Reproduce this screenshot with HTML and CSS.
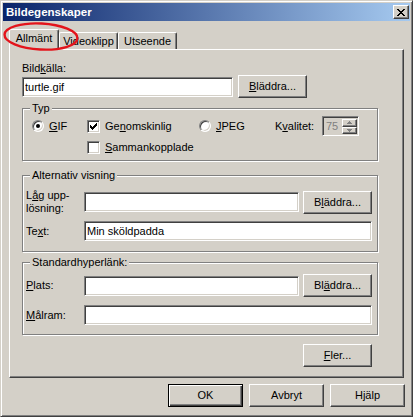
FILE: index.html
```html
<!DOCTYPE html>
<html lang="sv">
<head>
    <meta charset="UTF-8">
    <title>Bildegenskaper</title>
    <link rel="stylesheet" href="styles.css">
</head>
<body>

    <div class="window">
        <div class="titlebar">
            <span class="title">Bildegenskaper</span>
            <button class="close-btn">
                <svg width="8" height="7" viewBox="0 0 8 7" shape-rendering="crispEdges">
                    <path d="M0 0h2v1H0z M6 0h2v1H6z M1 1h2v1H1z M5 1h2v1H5z M2 2h4v1H2z M3 3h2v1H3z M2 4h4v1H2z M1 5h2v1H1z M5 5h2v1H5z M0 6h2v1H0z M6 6h2v1H6z" fill="#000"/>
                </svg>
            </button>
        </div>

        <div class="tabs">
            <div class="tab tab-active">Allmänt</div>
            <div class="tab">Videoklipp</div>
            <div class="tab">Utseende</div>
        </div>

        <div class="tab-panel">
            <label class="field-label">Bild<u>k</u>älla:</label>
            <div class="source-row">
                <input class="edit source-input" type="text" value="turtle.gif">
                <button class="btn"><u>B</u>läddra...</button>
            </div>

            <fieldset class="group group-type">
                <legend>Typ</legend>
                <div class="type-grid">
                    <div class="option"><span class="radio radio-on"></span><span><u>G</u>IF</span></div>
                    <div class="option">
                        <span class="check">
                            <svg width="7" height="7" viewBox="0 0 7 7" shape-rendering="crispEdges">
                                <path d="M0 2h1v3H0z M1 3h1v3H1z M2 4h1v3H2z M3 3h1v3H3z M4 2h1v3H4z M5 1h1v3H5z M6 0h1v3H6z" fill="#000"/>
                            </svg>
                        </span>
                        <span>Ge<u>n</u>omskinlig</span>
                    </div>
                    <div class="option"><span class="radio"></span><span><u>J</u>PEG</span></div>
                    <span>K<u>v</u>alitet:</span>
                    <div class="spinner">
                        <span class="spin-value">75</span>
                        <div class="spin-buttons">
                            <span class="spin-btn">
                                <svg width="5" height="3" viewBox="0 0 5 3" shape-rendering="crispEdges"><path d="M2 0h1v1H2z M1 1h3v1H1z M0 2h5v1H0z" fill="#808080"/></svg>
                            </span>
                            <span class="spin-btn">
                                <svg width="5" height="3" viewBox="0 0 5 3" shape-rendering="crispEdges"><path d="M0 0h5v1H0z M1 1h3v1H1z M2 2h1v1H2z" fill="#808080"/></svg>
                            </span>
                        </div>
                    </div>
                    <div class="option option-second">
                        <span class="check"></span>
                        <span><u>S</u>ammankopplade</span>
                    </div>
                </div>
            </fieldset>

            <fieldset class="group group-alt">
                <legend>Alternativ visning</legend>
                <div class="form-row form-row-tall">
                    <label class="row-label">L<u>å</u>g upp-<br>lösning:</label>
                    <input class="edit short-input" type="text" value="">
                    <button class="btn">B<u>l</u>äddra...</button>
                </div>
                <div class="form-row form-row-next">
                    <label class="row-label">Te<u>x</u>t:</label>
                    <input class="edit wide-input" type="text" value="Min sköldpadda">
                </div>
            </fieldset>

            <fieldset class="group group-link">
                <legend>Standardhyperlänk:</legend>
                <div class="form-row">
                    <label class="row-label"><u>P</u>lats:</label>
                    <input class="edit short-input" type="text" value="">
                    <button class="btn">Bl<u>ä</u>ddra...</button>
                </div>
                <div class="form-row form-row-link">
                    <label class="row-label"><u>M</u>ålram:</label>
                    <input class="edit wide-input" type="text" value="">
                </div>
            </fieldset>

            <div class="more-row">
                <button class="btn"><u>F</u>ler...</button>
            </div>
        </div>

        <div class="dialog-buttons">
            <button class="btn btn-wide btn-default">OK</button>
            <button class="btn btn-wide">Avbryt</button>
            <button class="btn btn-wide">Hjälp</button>
        </div>

        <svg class="highlight-ring" width="80" height="34" viewBox="0 0 80 34">
            <ellipse cx="38" cy="15.5" rx="36.5" ry="13" transform="rotate(3 38 15.5)" fill="none" stroke="#e3141b" stroke-width="2.4"/>
        </svg>
    </div>

</body>
</html>
```

FILE: styles.css
```css
* {
    box-sizing: border-box;
}

body {
    margin: 0;
    background-color: #d4d0c8;
    font-family: "Liberation Sans", Arial, sans-serif;
    font-size: 11px;
    color: #000000;
}

u {
    text-decoration: underline;
    text-underline-offset: 1px;
}

.window {
    position: relative;
    width: 413px;
    height: 417px;
    padding: 2px;
    border: 1px solid;
    border-color: #d4d0c8 #404040 #404040 #d4d0c8;
    box-shadow: inset 1px 1px #ffffff, inset -1px -1px #808080;
    background-color: #d4d0c8;
}

.titlebar {
    display: flex;
    align-items: center;
    height: 18px;
    padding-left: 3px;
    background: linear-gradient(to right, #0a246a, #a6caf0);
}

.title {
    font-weight: bold;
    font-size: 11.5px;
    line-height: 18px;
    color: #ffffff;
}

.close-btn {
    display: flex;
    align-items: center;
    justify-content: center;
    width: 16px;
    height: 14px;
    margin-left: auto;
    margin-right: 1px;
    padding: 0;
    background-color: #d4d0c8;
    border: 1px solid;
    border-color: #ffffff #404040 #404040 #ffffff;
    box-shadow: inset -1px -1px #808080;
}

/* tabs */

.tabs {
    display: flex;
    align-items: flex-end;
    height: 20px;
    margin: 8px 0 0 6px;
}

.tab {
    width: 59px;
    height: 17px;
    padding-top: 2px;
    line-height: 13px;
    text-align: center;
    border: 1px solid;
    border-bottom: 0;
    border-color: #ffffff #404040 #ffffff #ffffff;
    border-radius: 2px 2px 0 0;
    box-shadow: inset -1px 0 #808080;
    background-color: #d4d0c8;
}

.tab-active {
    position: relative;
    z-index: 1;
    width: 50px;
    height: 21px;
    margin-bottom: -1px;
}

.tab-panel {
    width: 395px;
    height: 329px;
    margin-left: 6px;
    padding: 12px 0 0 12px;
    border: 1px solid;
    border-color: #ffffff #404040 #404040 #ffffff;
    box-shadow: inset -1px -1px #808080;
}

/* controls */

.field-label {
    display: block;
    height: 13px;
    line-height: 13px;
}

.source-row {
    display: flex;
    align-items: center;
    gap: 5px;
    height: 23px;
}

.edit {
    height: 20px;
    padding: 0 2px;
    font: inherit;
    color: #000000;
    background-color: #ffffff;
    border: 1px solid;
    border-color: #808080 #ffffff #ffffff #808080;
    box-shadow: inset 1px 1px #404040, inset -1px -1px #d4d0c8;
    outline: none;
}

.source-input {
    width: 211px;
}

.short-input {
    width: 215px;
    margin-right: 4px;
}

.wide-input {
    flex: 1;
}

.btn {
    width: 69px;
    height: 23px;
    padding: 0;
    font: inherit;
    line-height: 13px;
    color: #000000;
    background-color: #d4d0c8;
    border: 1px solid;
    border-color: #ffffff #404040 #404040 #ffffff;
    box-shadow: inset -1px -1px #808080;
}

.btn-wide {
    width: 75px;
}

.btn-default {
    border-color: #000000;
    box-shadow: inset 1px 1px #ffffff, inset -1px -1px #404040, inset -2px -2px #808080;
}

/* group boxes */

.group {
    width: 356px;
    min-width: 0;
    margin: 0;
    padding: 0 5px 0 3px;
    border: 1px solid #808080;
    box-shadow: inset 1px 1px #ffffff, 1px 1px #ffffff;
}

.group legend {
    margin-left: 4px;
    padding: 0 2px;
    line-height: 13px;
    background-color: #d4d0c8;
}

.group-type {
    margin-top: 4px;
    padding-top: 1px;
    padding-bottom: 6px;
}

.group-alt {
    margin-top: 8px;
    padding-top: 7px;
    padding-bottom: 10px;
}

.group-link {
    margin-top: 4px;
    padding-top: 5px;
    padding-bottom: 9px;
}

.type-grid {
    display: grid;
    grid-template-columns: 55px 112px 76px 47px 37px;
    grid-template-rows: 20px 13px;
    row-gap: 5px;
    align-items: center;
    margin-left: 6px;
}

.option {
    display: flex;
    align-items: center;
    gap: 5px;
    line-height: 13px;
}

.option-second {
    grid-column: 2 / span 3;
}

.radio {
    display: flex;
    align-items: center;
    justify-content: center;
    width: 12px;
    height: 12px;
    border-radius: 50%;
    border: 1px solid;
    border-color: #808080 #ffffff #ffffff #808080;
    box-shadow: inset 1px 1px #404040, inset -1px -1px #d4d0c8;
    background-color: #ffffff;
}

.radio-on::after {
    content: "";
    width: 4px;
    height: 4px;
    border-radius: 50%;
    background-color: #000000;
}

.check {
    display: flex;
    align-items: center;
    justify-content: center;
    width: 13px;
    height: 13px;
    border: 1px solid;
    border-color: #808080 #ffffff #ffffff #808080;
    box-shadow: inset 1px 1px #404040, inset -1px -1px #d4d0c8;
    background-color: #ffffff;
}

.spinner {
    display: flex;
    width: 37px;
    height: 20px;
    padding: 2px 1px 1px 2px;
    border: 1px solid;
    border-color: #808080 #ffffff #ffffff #808080;
    box-shadow: inset 1px 1px #404040, inset -1px -1px #d4d0c8;
}

.spin-value {
    flex: 1;
    padding-left: 1px;
    line-height: 15px;
    color: #808080;
}

.spin-buttons {
    display: flex;
    flex-direction: column;
    width: 15px;
}

.spin-btn {
    display: flex;
    align-items: center;
    justify-content: center;
    height: 8px;
    border: 1px solid;
    border-color: #ffffff #404040 #404040 #ffffff;
    box-shadow: inset -1px -1px #808080;
}

.form-row {
    display: flex;
    align-items: center;
    height: 23px;
}

.form-row-tall {
    height: 26px;
}

.form-row-next {
    height: 20px;
    margin-top: 6px;
}

.form-row-link {
    height: 20px;
    margin-top: 8px;
}

.row-label {
    width: 58px;
    flex-shrink: 0;
    line-height: 13px;
}

.more-row {
    display: flex;
    justify-content: flex-end;
    width: 350px;
    margin-top: 9px;
}

.dialog-buttons {
    display: flex;
    justify-content: flex-end;
    gap: 6px;
    margin-top: 6px;
    padding-right: 5px;
}

.highlight-ring {
    position: absolute;
    z-index: 2;
    left: 2px;
    top: 20px;
}
```
